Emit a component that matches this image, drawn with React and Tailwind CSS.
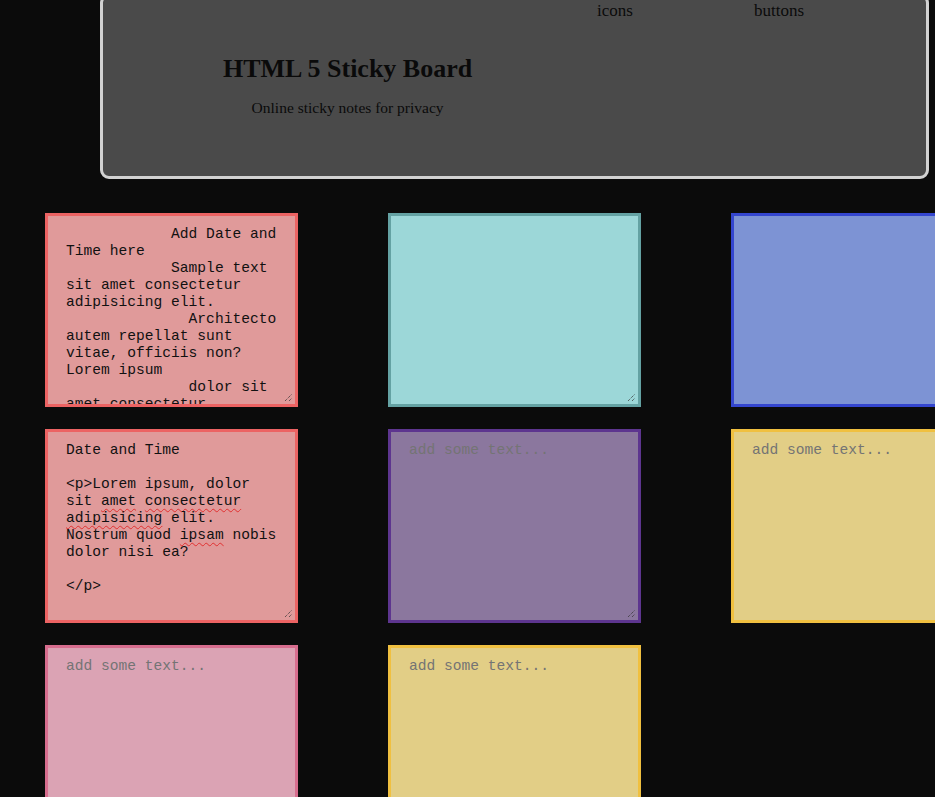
import React from "react";

const mono = { fontFamily: '"Liberation Mono", "Courier New", monospace' };

function Grip({ color = "#333" }) {
  return (
    <svg
      className="absolute right-[2px] bottom-[2px]"
      width="9"
      height="9"
      viewBox="0 0 9 9"
    >
      <path d="M1 8 L8 1" stroke={color} strokeWidth="1" strokeDasharray="1 1" />
      <path d="M5 8 L8 5" stroke={color} strokeWidth="1" strokeDasharray="1 1" />
    </svg>
  );
}

function Note({ bg, border, children, placeholder, grip }) {
  return (
    <div
      className={`relative h-[194px] w-[253px] border-[3px] ${bg} ${border} overflow-hidden`}
    >
      <div
        className="h-full overflow-hidden px-[18px] pt-[10px] text-[14.6px] leading-[17px] text-[#111] whitespace-pre"
        style={mono}
      >
        {placeholder ? (
          <span className="text-[#747474]">add some text...</span>
        ) : (
          children
        )}
      </div>
      {grip && <Grip />}
    </div>
  );
}

const sq = "underline decoration-wavy decoration-[#e03030] decoration-1 underline-offset-[3px]";

export default function App() {
  return (
    <div
      className="min-h-screen w-full overflow-hidden bg-[#0b0b0b] pb-10"
      style={{ fontFamily: '"Liberation Serif", "Times New Roman", serif' }}
    >
      <header className="ml-[100px] -mt-[6px] h-[185px] w-[829px] rounded-[9px] border-[3px] border-[#d2d2d2] bg-[#4a4a4a] text-[#0a0a0a]">
        <nav className="flex pl-[494px] pt-[4px] text-[17px] leading-[20px]">
          <span className="w-[157px]">icons</span>
          <span>buttons</span>
        </nav>
        <div className="ml-[120px] mt-[31px] inline-flex flex-col items-center">
          <h1 className="text-[26px] font-bold leading-[34px]">HTML 5 Sticky Board</h1>
          <p className="mt-[12px] text-[15.5px] leading-[20px]">Online sticky notes for privacy</p>
        </div>
      </header>

      <div className="mt-[34px] grid w-[1000px] grid-cols-[253px_253px_253px] gap-x-[90px] gap-y-[22px] pl-[45px]">
        <Note bg="bg-[#e09a9a]" border="border-[#ec6363]" grip>
          {[
            "            Add Date and",
            "Time here",
            "            Sample text",
            "sit amet consectetur",
            "adipisicing elit.",
            "              Architecto",
            "autem repellat sunt",
            "vitae, officiis non?",
            "Lorem ipsum",
            "              dolor sit",
            "amet consectetur",
          ].map((l, i) => (
            <div key={i} className="h-[17px]">{l}</div>
          ))}
        </Note>
        <Note bg="bg-[#9cd7d8]" border="border-[#64a2a3]" grip />
        <Note bg="bg-[#7d93d4]" border="border-[#3446cf]" />

        <Note bg="bg-[#e09a9a]" border="border-[#ec6363]" grip>
          <div className="h-[17px]">Date and Time</div>
          <div className="h-[17px]"></div>
          <div className="h-[17px]">&lt;p&gt;Lorem ipsum, dolor</div>
          <div className="h-[17px]">
            sit <span className={sq}>amet</span> <span className={sq}>consectetur</span>
          </div>
          <div className="h-[17px]">
            <span className={sq}>adipisicing</span> elit.
          </div>
          <div className="h-[17px]">
            Nostrum quod <span className={sq}>ipsam</span> nobis
          </div>
          <div className="h-[17px]">dolor nisi ea?</div>
          <div className="h-[17px]"></div>
          <div className="h-[17px]">&lt;/p&gt;</div>
        </Note>
        <Note bg="bg-[#8b779e]" border="border-[#5d358f]" placeholder grip />
        <Note bg="bg-[#e2ce86]" border="border-[#f0c040]" placeholder />

        <Note bg="bg-[#dba3b4]" border="border-[#d76d8e]" placeholder />
        <Note bg="bg-[#e2ce86]" border="border-[#f0c040]" placeholder />
      </div>
    </div>
  );
}
